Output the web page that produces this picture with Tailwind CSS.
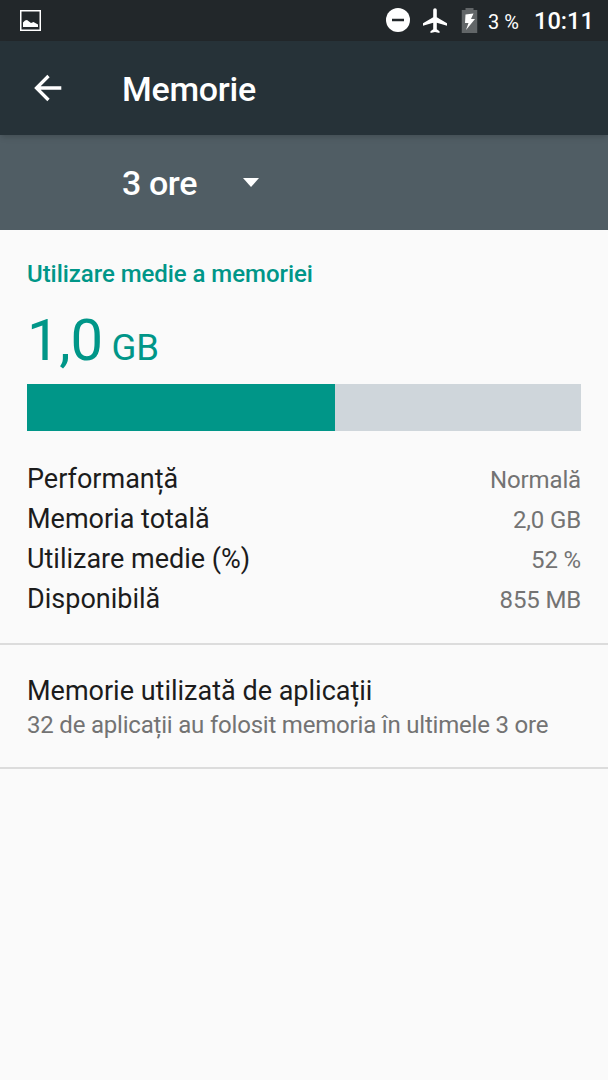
<!DOCTYPE html>
<html lang="ro">
<head>
<meta charset="utf-8">
<title>Memorie</title>
<script src="https://cdn.jsdelivr.net/npm/@tailwindcss/browser@4"></script>
</head>
<body class="bg-[#fafafa] font-[Roboto,sans-serif]">
<div class="flex h-[1080px] w-[608px] flex-col overflow-hidden">
  <div class="flex h-[41px] shrink-0 items-center bg-[#22272a] pl-5 text-white">
    <svg class="h-[21px] w-[21px]" viewBox="0 0 21 21" fill="none"><rect x=".75" y=".75" width="19.500" height="19.500" stroke="#fff" stroke-width="1.500"/><path d="M3 17v-4.500L5 10.500 7 10l4 3 2.500-1L18 14.500V17z" fill="#fff"/></svg>
    <div class="ml-[345px] flex items-center">
      <svg class="h-6 w-6" viewBox="0 0 24 24"><circle cx="12" cy="12" r="12" fill="#fff"/><path d="M6 10.750h12v2.500H6z" fill="#22272a"/></svg>
      <svg class="ml-[13px] h-[25px] w-6" viewBox="0 0 24 25" fill="#fff"><path d="M10.200 2a1.800 1.800 0 0 1 3.600 0v7.200l10.200 6v2.600l-10.200-3v6.400l2.700 2V25L12 24l-4.500 1v-1.800l2.700-2v-6.400L0 17.800v-2.600l10.200-6z"/></svg>
      <svg class="ml-[14px] h-[25px] w-4 translate-x-[0.500px]" viewBox="0 0 16 25"><path d="M4 0h8v2h4v23H0V2h4z" fill="#626668"/><path d="M12 5.500L4 6.500 3.500 15H7L4.500 22l9-11H9.500z" fill="#fff"/></svg>
      <span class="ml-[11px] w-[46px] pt-[3px] text-[20px] whitespace-nowrap">3 %</span>
      <span class="pt-[3px] text-[23.600px] font-medium">10:11</span>
    </div>
  </div>
  <header class="z-10 flex h-[94px] shrink-0 items-center bg-[#263238] pl-[34px] text-white shadow-md">
    <svg class="h-7 w-7" viewBox="0 0 28 28" fill="none" stroke="#fff" stroke-width="3.300"><path d="M14.500 2L2.500 14l12 12M2 14h25.300"/></svg>
    <h1 class="ml-[60px] pt-0.5 text-[34px] font-medium tracking-[-0.250px]">Memorie</h1>
  </header>
  <div class="flex h-[95px] shrink-0 items-center bg-[#505d64] pl-[122px] text-white">
    <span class="w-[121px] pt-0.5 text-[34px] font-medium tracking-[-0.400px]">3 ore</span>
    <svg class="h-[9px] w-4" viewBox="0 0 16 9"><path d="M0 0h16L8 9z" fill="#fff"/></svg>
  </div>
  <main>
    <section class="h-[415px] border-b-2 border-[#dcdcdc] px-[27px] pt-7">
      <h2 class="h-8 text-[24px] leading-8 font-medium tracking-[-0.050px] text-[#009688]">Utilizare medie a memoriei</h2>
      <div class="h-[94px] pt-4 leading-[68px] text-[#009688]"><span class="text-[58px] tracking-[-0.300px]">1,0</span><span class="text-[36.500px] tracking-[-0.200px]"> GB</span></div>
      <div class="flex h-[47px] bg-[#cfd6db]"><div class="w-[308px] bg-[#009688]"></div></div>
      <dl class="mt-7 text-[27px] leading-10 text-[#1c1c1c]">
        <div class="flex h-10 justify-between"><dt>Performanță</dt><dd class="pt-px text-[24px] leading-10 tracking-[-0.150px] text-[#737373]">Normală</dd></div>
        <div class="flex h-10 justify-between"><dt>Memoria totală</dt><dd class="pt-px text-[24px] leading-10 tracking-[-0.150px] text-[#737373]">2,0 GB</dd></div>
        <div class="flex h-10 justify-between"><dt>Utilizare medie (%)</dt><dd class="pt-px text-[24px] leading-10 tracking-[-0.150px] text-[#737373]">52 %</dd></div>
        <div class="flex h-10 justify-between"><dt>Disponibilă</dt><dd class="pt-px text-[24px] leading-10 tracking-[-0.150px] text-[#737373]">855 MB</dd></div>
      </dl>
    </section>
    <section class="h-[124px] border-b-2 border-[#dcdcdc] px-[27px] pt-7">
      <h3 class="text-[27px] leading-9 text-[#1c1c1c]">Memorie utilizată de aplicații</h3>
      <p class="text-[24px] leading-8 tracking-[-0.200px] text-[#737373]">32 de aplicații au folosit memoria în ultimele 3 ore</p>
    </section>
  </main>
</div>
</body>
</html>
